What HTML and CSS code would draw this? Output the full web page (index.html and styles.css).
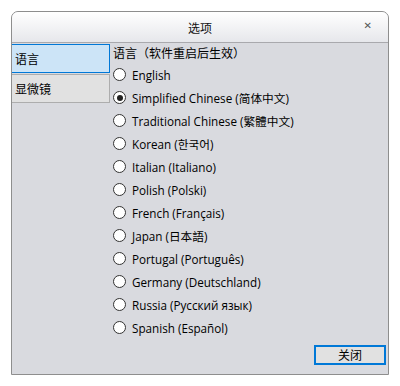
FILE: index.html
```html
<!DOCTYPE html>
<html lang="zh">
<head>
<meta charset="utf-8">
<title>选项</title>
<link rel="stylesheet" href="styles.css">
</head>
<body>
<div class="window">
  <div class="titlebar">
    <span class="title">选项</span>
    <span class="close">✕</span>
  </div>
  <div class="body">
    <div class="content">
      <div class="nav">
        <div class="nav-item active">语言</div>
        <div class="nav-item">显微镜</div>
      </div>
      <div class="main">
        <div class="heading">语言（软件重启后生效）</div>
        <label class="opt"><span class="radio"></span>English</label>
        <label class="opt"><span class="radio checked"></span>Simplified Chinese (简体中文)</label>
        <label class="opt"><span class="radio"></span>Traditional Chinese (繁體中文)</label>
        <label class="opt"><span class="radio"></span>Korean (한국어)</label>
        <label class="opt"><span class="radio"></span>Italian (Italiano)</label>
        <label class="opt"><span class="radio"></span>Polish (Polski)</label>
        <label class="opt"><span class="radio"></span>French (Français)</label>
        <label class="opt"><span class="radio"></span>Japan (日本語)</label>
        <label class="opt"><span class="radio"></span>Portugal (Português)</label>
        <label class="opt"><span class="radio"></span>Germany (Deutschland)</label>
        <label class="opt"><span class="radio"></span>Russia (Русский язык)</label>
        <label class="opt"><span class="radio"></span>Spanish (Español)</label>
      </div>
    </div>
    <div class="footer">
      <button class="btn">关闭</button>
    </div>
  </div>
</div>
</body>
</html>
```
FILE: styles.css
```css
html, body {
  margin: 0;
  padding: 0;
  background: #ffffff;
}
body {
  padding: 11px 0 0 11px;
  font-family: "Open Sans", "Noto Sans CJK SC", sans-serif;
  font-size: 11.7px;
  color: #000;
}
.window {
  width: 376px;
  height: 362px;
  border: 1px solid #8e8e8e;
  border-radius: 7px 7px 0 0;
  display: flex;
  flex-direction: column;
  overflow: hidden;
  background: #d9dadf;
}
.titlebar {
  height: 30px;
  flex: none;
  border-bottom: 1px solid #a9a9ad;
  background: linear-gradient(#ffffff, #e6e7eb);
  display: flex;
  align-items: center;
  justify-content: center;
  position: relative;
}
.title {
  font-family: "Noto Sans CJK SC", sans-serif;
  font-size: 12px;
  color: #111;
}
.close {
  position: absolute;
  right: 16px;
  top: 8px;
  font-size: 10px;
  color: #555;
  font-family: "DejaVu Sans", sans-serif;
}
.body {
  flex: 1;
  display: flex;
  flex-direction: column;
}
.content {
  flex: 1;
  display: flex;
}
.nav {
  width: 99px;
  padding-top: 1px;
  margin-left: -1px;
  display: flex;
  flex-direction: column;
  gap: 1px;
}
.nav-item {
  height: 27px;
  border: 1px solid #adadad;
  background: #e1e1e1;
  font-family: "Noto Sans CJK SC", sans-serif;
  font-size: 12px;
  display: flex;
  align-items: center;
  padding-left: 3px;
}
.nav-item.active {
  border-color: #0078d7;
  background: #cce4f7;
}
.main {
  padding-left: 3px;
  display: flex;
  flex-direction: column;
}
.heading {
  height: 20px;
  line-height: 20px;
  font-family: "Noto Sans CJK SC", sans-serif;
  font-size: 12px;
}
.opt {
  height: 23px;
  display: flex;
  align-items: center;
  gap: 6px;
  white-space: nowrap;
}
.radio {
  width: 11px;
  height: 11px;
  border: 1px solid #333;
  border-radius: 50%;
  background: #fff;
  display: flex;
  align-items: center;
  justify-content: center;
  flex: none;
}
.radio.checked::after {
  content: "";
  width: 6px;
  height: 6px;
  border-radius: 50%;
  background: #222;
}
.footer {
  height: 29px;
  flex: none;
  display: flex;
  justify-content: flex-end;
  align-items: flex-start;
  padding-right: 2px;
}
.btn {
  width: 72px;
  height: 20px;
  border: 2px solid #0078d7;
  background: #e1e1e1;
  font-family: "Noto Sans CJK SC", sans-serif;
  font-size: 12px;
  padding: 0;
  color: #000;
  line-height: 14px;
}
```
